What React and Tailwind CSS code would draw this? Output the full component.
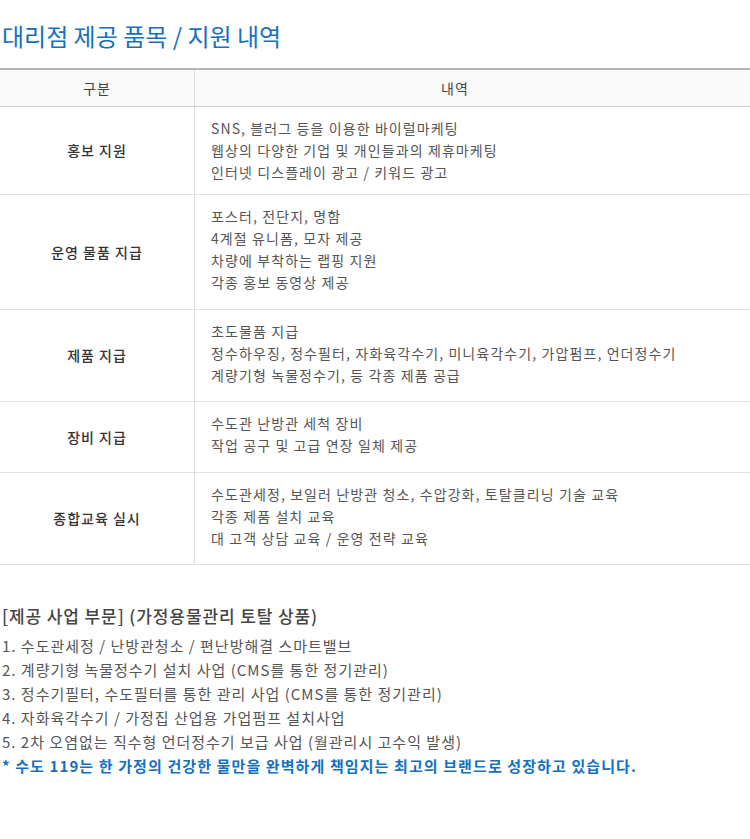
export default function App() {

  const rows = [
    {
      label: '홍보 지원',
      h: 'h-[88px]',
      lines: [
        'SNS, 블러그 등을 이용한 바이럴마케팅',
        '웹상의 다양한 기업 및 개인들과의 제휴마케팅',
        '인터넷 디스플레이 광고 / 키워드 광고',
      ],
    },
    {
      label: '운영 물품 지급',
      h: 'h-[115px]',
      lines: [
        '포스터, 전단지, 명함',
        '4계절 유니폼, 모자 제공',
        '차량에 부착하는 랩핑 지원',
        '각종 홍보 동영상 제공',
      ],
    },
    {
      label: '제품 지급',
      h: 'h-[92px]',
      lines: [
        '초도물품 지급',
        '정수하우징, 정수필터, 자화육각수기, 미니육각수기, 가압펌프, 언더정수기',
        '계량기형 녹물정수기, 등 각종 제품 공급',
      ],
    },
    {
      label: '장비 지급',
      h: 'h-[71px]',
      lines: ['수도관 난방관 세척 장비', '작업 공구 및 고급 연장 일체 제공'],
    },
    {
      label: '종합교육 실시',
      h: 'h-[92px]',
      lines: [
        '수도관세정, 보일러 난방관 청소, 수압강화, 토탈클리닝 기술 교육',
        '각종 제품 설치 교육',
        '대 고객 상담 교육 / 운영 전략 교육',
      ],
    },
  ];

  const items = [
    '1. 수도관세정 / 난방관청소 / 편난방해결 스마트밸브',
    '2. 계량기형 녹물정수기 설치 사업 (CMS를 통한 정기관리)',
    '3. 정수기필터, 수도필터를 통한 관리 사업 (CMS를 통한 정기관리)',
    '4. 자화육각수기 / 가정집 산업용 가업펌프 설치사업',
    '5. 2차 오염없는 직수형 언더정수기 보급 사업 (월관리시 고수익 발생)',
  ];

  return (
    <div className="w-[750px] min-h-[839px] bg-white font-['Noto_Sans_CJK_KR','Noto_Sans',sans-serif] text-[#555]">

      {/* TITLE */}
      <h1 className="pt-[20px] pl-[2px] text-[24px] leading-[32px] text-[#1470c0]">
        대리점 제공 품목 / 지원 내역
      </h1>

      {/* TABLE */}
      <div className="mt-[16px] border-t-2 border-[#b5b5b5] text-[14px]">
        <div className="grid grid-cols-[195px_1fr] h-[37px] bg-[#f9f9f9] border-b border-[#cfcfcf] text-[#444] tracking-[1px]">
          <div className="flex items-center justify-center border-r border-[#ddd]">구분</div>
          <div className="flex items-center justify-center pr-[35px]">내역</div>
        </div>

        {rows.map((row) => (
          <div
            key={row.label}
            className={`grid grid-cols-[195px_1fr] border-b border-[#e0e0e0] ${row.h}`}
          >
            <div className="flex items-center justify-center border-r border-[#ddd] font-medium text-[#333] tracking-[1px]">
              {row.label}
            </div>
            <div className="pl-[16px] pt-[10px] leading-[22px] tracking-[1.1px]">
              {row.lines.map((line) => (
                <div key={line}>{line}</div>
              ))}
            </div>
          </div>
        ))}
      </div>

      {/* BUSINESS */}
      <div className="pt-[38px] pl-[2px]">
        <h2 className="text-[17px] leading-[26px] font-medium text-[#444] mb-[5px] tracking-[0.9px]">
          [제공 사업 부문] (가정용물관리 토탈 상품)
        </h2>
        <ul className="text-[15px] leading-[24px] tracking-[1px]">
          {items.map((item) => (
            <li key={item}>{item}</li>
          ))}
          <li className="font-bold text-[#1470c0] tracking-[1.1px]">
            * 수도 119는 한 가정의 건강한 물만을 완벽하게 책임지는 최고의 브랜드로 성장하고 있습니다.
          </li>
        </ul>
      </div>

    </div>
  );
}
